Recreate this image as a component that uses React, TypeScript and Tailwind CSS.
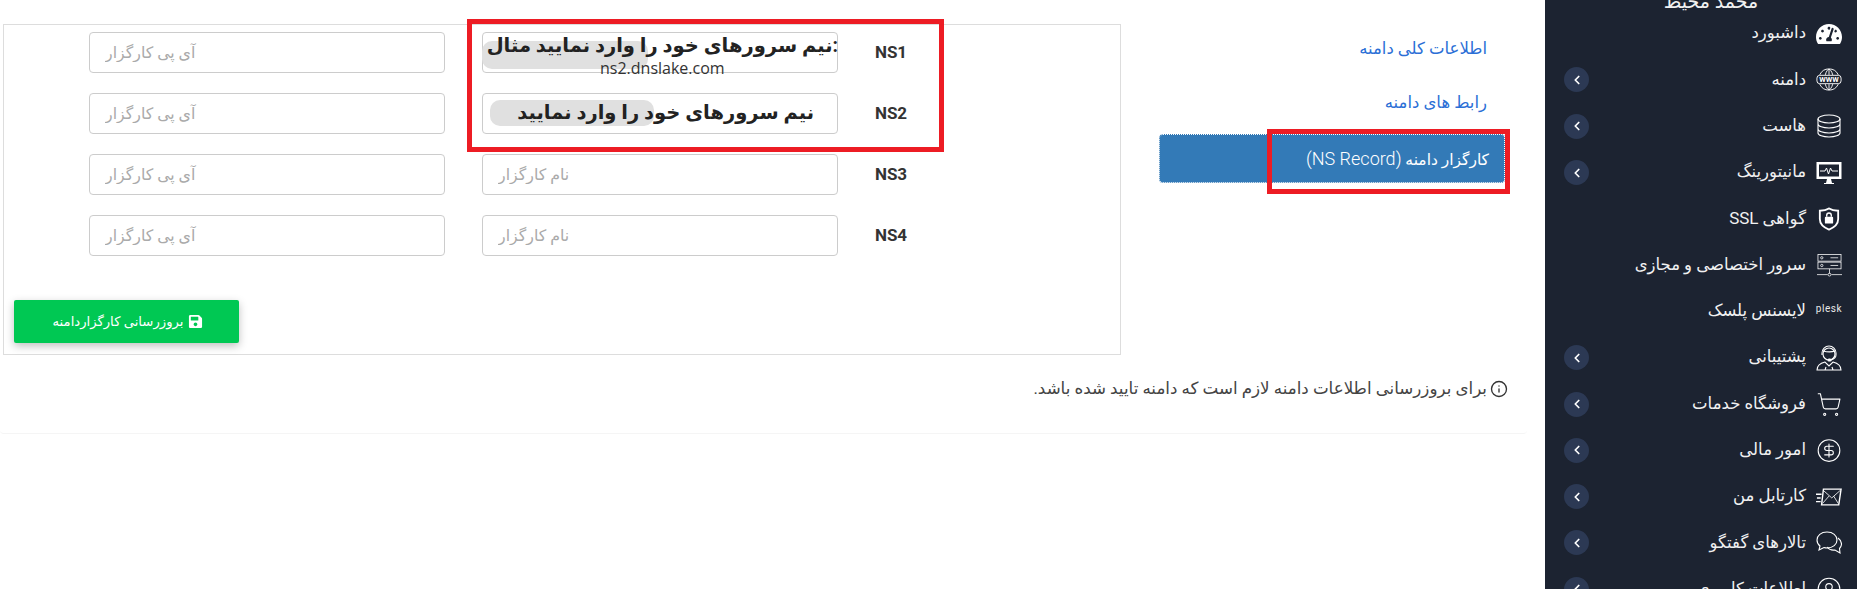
import React from "react";
import { ChevronLeft, ShoppingCart, CircleDollarSign, CircleUser, Info } from "lucide-react";
import { FaTachometerAlt, FaSave } from "react-icons/fa";

const Www = () => (
  <svg viewBox="0 0 28 24" className="w-[27px] h-[23px]" fill="none" stroke="white" strokeWidth="1">
    <path d="M4 7a11 11 0 0 1 20 0M4 17a11 11 0 0 0 20 0" />
    <path d="M10 7c1-4 3-6 4-6s3 2 4 6M10 17c1 4 3 6 4 6s3-2 4-6M14 1v6M14 17v6" />
    <rect x="1" y="7.5" width="26" height="9" rx="3" />
    <text x="14" y="15" fontSize="8" fontWeight="700" fill="white" stroke="none" textAnchor="middle" fontFamily="Roboto">WWW</text>
  </svg>
);
const Db = () => (
  <svg viewBox="0 0 24 24" className="w-[24px] h-[24px]" fill="none" stroke="white" strokeWidth="1.100">
    <ellipse cx="12" cy="5" rx="11" ry="4" />
    <path d="M1 5v14c0 2.200 5 4 11 4s11-1.800 11-4V5M1 10c0 2.200 5 4 11 4s11-1.800 11-4M1 15c0 2.200 5 4 11 4s11-1.800 11-4" />
  </svg>
);
const Pulse = () => (
  <svg viewBox="0 0 26 24" className="w-[26px] h-[24px]">
    <rect x="0.5" y="1" width="25" height="17" fill="white" />
    <rect x="3" y="3.500" width="20" height="12" fill="#1c2331" />
    <path d="M4 10h5l1.500-3 2 6 2-6 1.500 3h6" fill="none" stroke="white" strokeWidth="1" />
    <path d="M11 18h4l1 4h2v1H8v-1h2z" fill="white" />
  </svg>
);
const Shield = () => (
  <svg viewBox="0 0 24 26" className="w-[22px] h-[24px]" fill="none">
    <path d="M12 1.500c3 2 6 2.500 10 2.500v9c0 6-5 9.500-10 11.500C7 22.500 2 19 2 13V4c4 0 7-.5 10-2.500z" stroke="white" strokeWidth="2" />
    <rect x="7.500" y="10.500" width="9" height="7.500" rx="1" fill="white" />
    <path d="M9.500 10.500V9a2.500 2.500 0 0 1 5 0v1.500" stroke="white" strokeWidth="1.500" />
  </svg>
);
const Server = () => (
  <svg viewBox="0 0 26 24" className="w-[25px] h-[24px]" fill="none" stroke="white" strokeWidth="0.8">
    <rect x="1" y="1" width="24" height="7" />
    <rect x="1" y="9" width="24" height="7" />
    <circle cx="5" cy="4.500" r="1.200" />
    <circle cx="5" cy="12.500" r="1.200" />
    <path d="M14 4.500h8M14 12.500h8M13 16v5M0 22h11M15 22h11" />
    <circle cx="13" cy="22" r="1.500" />
  </svg>
);
const Support = () => (
  <svg viewBox="0 0 26 26" className="w-[26px] h-[26px]" fill="none" stroke="white" strokeWidth="1.100">
    <circle cx="13" cy="9" r="6" />
    <path d="M6 10V8a7 7 0 0 1 14 0v2M7 6c4 1 9 1 12 0M20 10c0 3-2 4-5 5" />
    <rect x="12" y="14" width="3" height="2" rx="1" fill="white" />
    <path d="M1 25c0-5 4-7 8-8l4 4 4-4c4 1 8 3 8 8zM9 25l1-3M17 25l-1-3" />
  </svg>
);
const MailFast = () => (
  <svg viewBox="0 0 28 20" className="w-[28px] h-[20px]" fill="none" stroke="white">
    <path d="M8 1.500h19l-2.500 17h-18.500z" strokeWidth="1.500" />
    <path d="M8 3l9 8 9-8M7 17l7-8M24 17l-5-8" strokeWidth="0.900" />
    <path d="M0 7h6M1 11h4M0 15h5" strokeWidth="1.500" />
  </svg>
);
const Chat = () => (
  <svg viewBox="0 0 26 24" className="w-[26px] h-[24px]" fill="none" stroke="white" strokeWidth="1.100">
    <path d="M11 1C5 1 1 4.500 1 9c0 2.500 1 4.500 3 6l-1 4 5-2.500c1 .3 2 .5 3 .5 6 0 10-3.500 10-8s-4-8-10-8z" />
    <path d="M22 7c2 1.500 3.500 3.500 3.500 6 0 2-1 3.500-2 4.500l.5 4.500-5-3c-3 .5-6-.5-8-3" />
  </svg>
);

const Plesk = () => <span className="text-[10px] font-normal tracking-[0.6px] text-[#e8e8e8] leading-none mb-[5px]" style={{ fontFamily: "Roboto, sans-serif" }}>plesk</span>;

const menu: { label: React.ReactNode; icon: React.ReactNode; arrow?: boolean }[] = [
  { label: "داشبورد", icon: <FaTachometerAlt className="w-[26px] h-[26px] text-white" /> },
  { label: "دامنه", icon: <Www />, arrow: true },
  { label: "هاست", icon: <Db />, arrow: true },
  { label: "مانیتورینگ", icon: <Pulse />, arrow: true },
  { label: <>گواهی <span className="text-[17px]">SSL</span></>, icon: <Shield /> },
  { label: "سرور اختصاصی و مجازی", icon: <Server /> },
  { label: "لایسنس پلسک", icon: <Plesk /> },
  { label: "پشتیبانی", icon: <Support />, arrow: true },
  { label: "فروشگاه خدمات", icon: <ShoppingCart className="w-[27px] h-[27px] text-white" strokeWidth={1} />, arrow: true },
  { label: "امور مالی", icon: <CircleDollarSign className="w-[27px] h-[27px] text-white" strokeWidth={1} />, arrow: true },
  { label: "کارتابل من", icon: <MailFast />, arrow: true },
  { label: "تالارهای گفتگو", icon: <Chat />, arrow: true },
  { label: "اطلاعات کاربری", icon: <CircleUser className="w-[26px] h-[26px] text-white" strokeWidth={1} />, arrow: true },
];

const inputCls = "w-[356px] h-[41px] rounded-[4px] border border-[#ccc] bg-white px-[15px] text-left text-[15.8px] placeholder:text-[#aaa] outline-none";

function Row({ ns, overlay }: { ns: string; overlay?: React.ReactNode }) {
  return (
    <div className="flex items-center">
      <div className="w-[282px] pr-[176px] text-[17px] font-bold text-[#333]" dir="ltr">
        <div className="w-[106px] text-center">{ns}</div>
      </div>
      <div className="relative w-[356px] h-[41px] ml-[37px]">
        <input className={inputCls} dir="rtl" placeholder="نام کارگزار" />
        {overlay}
      </div>
      <input className={inputCls} dir="rtl" placeholder="آی پی کارگزار" />
    </div>
  );
}

export default function App() {
  return (
    <div dir="rtl" className="flex w-[1857px] h-[589px] overflow-hidden bg-white text-[#333]" style={{ fontFamily: 'Roboto, "DejaVu Sans", sans-serif' }}>
      <aside className="w-[312px] h-[589px] shrink-0 bg-[#1c2331] pl-[15px] pr-[15px] text-[#f1f1f1]">
        <div className="h-[10.5px] flex items-end justify-center pl-[20px]">
          <span className="text-[19px] font-medium leading-[20px] mb-[-1px] whitespace-nowrap">محمد محیط</span>
        </div>
        {menu.map((m, i) => (
          <div key={i} className="h-[46.3px] flex items-center">
            <div className="w-[26px] flex justify-center shrink-0">{m.icon}</div>
            <div className="mr-[10px] text-[16.5px] whitespace-nowrap">{m.label}</div>
            {m.arrow && (
              <div className="mr-auto ml-[4px] w-[25px] h-[25px] rounded-full bg-[#2c3954] flex items-center justify-center">
                <ChevronLeft className="w-[14px] h-[14px] text-white" strokeWidth={3} />
              </div>
            )}
          </div>
        ))}
      </aside>

      <main className="flex-1">
        <section className="relative mr-[18px] h-[434px] border-b border-[#f5f5f5] rounded-b-[4px] pr-[22px] pt-[24px]">
          <div className="flex gap-[38px]">
            <nav className="w-[346px] flex flex-col gap-[6px] text-[16.5px]">
              <a className="h-[49px] flex items-center pr-[18px] pt-[1px] text-[#2b6fd6]">اطلاعات کلی دامنه</a>
              <a className="h-[49px] flex items-center pr-[18px] text-[#2b6fd6]">رابط های دامنه</a>
              <a className="h-[49px] flex items-center pr-[15px] text-white bg-[#337ab7] rounded-[4px] border border-dotted border-white">
                <span className="text-[15.5px]">کارگزار دامنه <span className="text-[18px] font-light">(NS Record)</span></span>
              </a>
            </nav>
            <div className="w-[1118px] h-[331px] border border-[#ddd] pt-[7px] flex flex-col">
              <div className="flex flex-col gap-[20px]">
                <Row
                  ns="NS1"
                  overlay={
                    <>
                      <div className="absolute left-0 top-[9px] w-[166px] h-[28px] rounded-[10px] bg-[#e0e0e0]" />
                      <div dir="ltr" className="absolute right-0 top-[-1px] text-[19.5px] font-bold text-[#222] whitespace-nowrap">نیم سرورهای خود را وارد نمایید مثال:</div>
                      <div dir="ltr" className="absolute left-[118px] top-[24px] text-[16px] text-[#333]" style={{ fontFamily: '"Open Sans", sans-serif' }}>ns2.dnslake.com</div>
                    </>
                  }
                />
                <Row
                  ns="NS2"
                  overlay={
                    <>
                      <div className="absolute left-[8px] top-[7px] w-[164px] h-[26px] rounded-[10px] bg-[#e0e0e0]" />
                      <div className="absolute right-[24px] top-[5px] text-[19.5px] font-bold text-[#222] whitespace-nowrap">نیم سرورهای خود را وارد نمایید</div>
                    </>
                  }
                />
                <Row ns="NS3" />
                <Row ns="NS4" />
              </div>
              <button className="mt-[44px] mr-auto ml-[10px] w-[225px] h-[43px] rounded-[2px] bg-[#00c853] text-white text-[13.2px] flex items-center justify-center gap-[5px] pl-[3px] shadow-[0_3px_8px_rgba(0,0,0,0.25)]">
                <FaSave className="w-[15px] h-[15px]" />
                <span>بروزرسانی کارگزاردامنه</span>
              </button>
            </div>
          </div>
          <div className="mt-[21px] mr-[-3px] flex items-center gap-[3px] text-[16.7px] text-[#444] whitespace-nowrap">
            <Info className="w-[18px] h-[18px] text-[#333]" strokeWidth={1.8} />
            <span>برای بروزرسانی اطلاعات دامنه لازم است که دامنه تایید شده باشد.</span>
          </div>
        </section>
      </main>

      <div className="absolute left-[1267px] top-[129px] w-[243px] h-[65px] border-[5px] border-[#ed1c24] pointer-events-none" />
      <div className="absolute left-[467px] top-[19px] w-[477px] h-[133px] border-[5px] border-[#ed1c24] pointer-events-none" />
    </div>
  );
}
